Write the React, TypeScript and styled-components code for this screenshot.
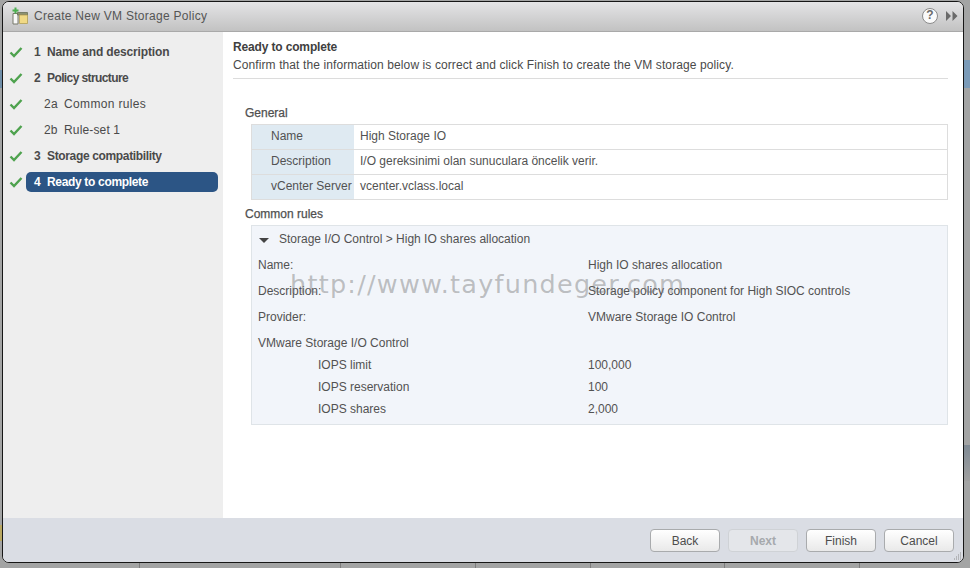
import React from "react";
import styled, { createGlobalStyle } from "styled-components";

const Global = createGlobalStyle`
  html, body { margin: 0; padding: 0; width: 970px; height: 568px; overflow: hidden; background: #a3a3a3; }
  * { box-sizing: border-box; }
  body { font-family: "Liberation Sans", Arial, sans-serif; font-size: 12px; color: #525252; }
`;

const Backdrop = styled.div`
  position: relative;
  width: 970px;
  height: 568px;
  padding: 1px 6px 5px 2px;
  background-color: #a3a4a4;
  background-image:
    linear-gradient(#7b9bb8, #7b9bb8),
    linear-gradient(#7f8a94, #a0a0a0),
    linear-gradient(#6f8ea8, #6f8ea8),
    linear-gradient(#b9a862, #b9a862),
    linear-gradient(90deg, #7d7d7d 1px, transparent 1px),
    linear-gradient(90deg, #7d7d7d 1px, transparent 1px),
    linear-gradient(90deg, #7d7d7d 1px, transparent 1px),
    linear-gradient(90deg, #7d7d7d 1px, transparent 1px),
    linear-gradient(90deg, #7d7d7d 1px, transparent 1px),
    linear-gradient(90deg, #7d7d7d 1px, transparent 1px);
  background-repeat: no-repeat;
  background-size: 6px 28px, 6px 36px, 2px 18px, 2px 16px, 1px 5px, 1px 5px, 1px 5px, 1px 5px, 1px 5px, 1px 5px;
  background-position: 964px 60px, 964px 445px, 0 70px, 0 525px, 139px 563px, 340px 563px, 475px 563px, 590px 563px, 724px 563px, 859px 563px;
`;

const Dialog = styled.div`
  width: 962px;
  height: 562px;
  display: flex;
  flex-direction: column;
  border: 1px solid #161616;
  border-radius: 7px;
  overflow: hidden;
  background: #fff;
`;

const Header = styled.header`
  flex: 0 0 30px;
  display: flex;
  align-items: center;
  padding: 0 5px 1px 9px;
  gap: 4px;
  background: linear-gradient(#e4e4e6, #c2c2c2);
  border-bottom: 1px solid #a9a9a9;
`;

const Title = styled.div`
  flex: 1;
  font-size: 12px;
  color: #555555;
  letter-spacing: 0.28px;
`;

const HelpIcon = styled.div`
  width: 16px;
  height: 16px;
  margin-right: 4px;
  border-radius: 50%;
  border: 1.5px solid #8a8a8a;
  background: #fafafa;
  color: #6a6a6a;
  font-size: 12px;
  font-weight: bold;
  line-height: 13px;
  text-align: center;
`;

const Body = styled.div`
  flex: 1;
  display: flex;
  min-height: 0;
`;

const Sidebar = styled.nav`
  flex: 0 0 220px;
  background: #eeeeee;
  padding: 10px 5px 0 0;
  display: flex;
  flex-direction: column;
  gap: 6px;
`;

const Step = styled.div`
  display: flex;
  align-items: center;
  height: 20px;
  gap: 3px;
  padding-left: 6px;
`;

const StepLabel = styled.div<{ $active?: boolean; $sub?: boolean; $spacing: number }>`
  flex: 1;
  height: 20px;
  line-height: 20px;
  border-radius: 5px;
  display: flex;
  padding-left: ${(p) => (p.$sub ? 18 : 8)}px;
  background: ${(p) => (p.$active ? "#2c5585" : "transparent")};
  color: ${(p) => (p.$active ? "#ffffff" : "#4a4a4a")};
  font-weight: ${(p) => (p.$sub ? "normal" : "bold")};
  letter-spacing: ${(p) => p.$spacing}px;
`;

const StepNum = styled.span<{ $sub?: boolean }>`
  flex: 0 0 ${(p) => (p.$sub ? 20 : 13)}px;
`;

const Main = styled.main`
  flex: 1;
  padding: 8px 15px 0 10px;
  min-width: 0;
`;

const Heading = styled.div`
  font-weight: bold;
  font-size: 12px;
  letter-spacing: -0.15px;
  color: #404040;
  line-height: 14px;
`;

const Sub = styled.div`
  font-size: 12px;
  line-height: 14px;
  margin-top: 4px;
  letter-spacing: 0.1px;
  color: #4a4a4a;
  padding-bottom: 6px;
  border-bottom: 1px solid #dcdcdc;
`;

const Section = styled.div<{ $top: number }>`
  margin: ${(p) => p.$top}px 0 0 12px;
  font-size: 12px;
  color: #505050;
  line-height: 14px;
  -webkit-text-stroke: 0.25px #505050;
`;

const InfoTable = styled.div`
  margin: 4px 0 0 18px;
  border: 1px solid #dddddd;
`;

const InfoRow = styled.div`
  display: flex;
  height: 24px;
  & + & { height: 25px; border-top: 1px solid #dddddd; }
`;

const InfoKey = styled.div`
  flex: 0 0 102px;
  background: #dfeaf2;
  padding-left: 19px;
  line-height: 23px;
  white-space: nowrap;
  overflow: hidden;
`;

const InfoVal = styled.div`
  flex: 1;
  padding-left: 6px;
  line-height: 23px;
`;

const Rules = styled.div`
  margin: 4px 0 0 18px;
  border: 1px solid #dfe4e8;
  background: #f2f5fa;
  height: 200px;
  padding: 0 0 0 6px;
`;

const RuleHead = styled.div`
  display: flex;
  align-items: center;
  height: 26px;
  gap: 10px;
`;

const Caret = styled.div`
  width: 0;
  height: 0;
  margin-top: 2px;
  border-left: 5px solid transparent;
  border-right: 5px solid transparent;
  border-top: 5px solid #444;
  margin-left: 1px;
`;

const KV = styled.div<{ $h: number; $line?: number; $indent?: boolean }>`
  display: grid;
  grid-template-columns: ${(p) => (p.$indent ? "60px 270px 1fr" : "330px 1fr")};
  height: ${(p) => p.$h}px;
  line-height: ${(p) => p.$line ?? p.$h}px;
`;

const Footer = styled.footer`
  flex: 0 0 44px;
  background: #dadde4;
  display: flex;
  justify-content: flex-end;
  gap: 8px;
  padding: 11px 9px 0 0;
  position: relative;
`;

const Button = styled.button<{ $disabled?: boolean }>`
  width: 70px;
  height: 23px;
  padding: 0;
  border: 1px solid ${(p) => (p.$disabled ? "#cfd2d6" : "#a9abad")};
  border-radius: 4px;
  background: ${(p) => (p.$disabled ? "#e4e6ea" : "linear-gradient(#ffffff, #e9e9e9)")};
  color: ${(p) => (p.$disabled ? "#a6a9ad" : "#4d4d4d")};
  font: ${(p) => (p.$disabled ? "bold" : "normal")} 12px "Liberation Sans", Arial, sans-serif;
`;

const Grip = styled.svg`
  position: absolute;
  right: 1px;
  bottom: 1px;
`;

const Watermark = styled.div`
  position: absolute;
  left: 290px;
  top: 268px;
  font-family: "DejaVu Sans", sans-serif;
  font-size: 25.5px;
  line-height: 32px;
  letter-spacing: 1.24px;
  color: rgba(120, 120, 120, 0.45);
  white-space: nowrap;
`;

const Tick = () => (
  <svg width="14" height="12" viewBox="0 0 14 12">
    <path d="M1.5 6.5 L5 10 L12.5 2" fill="none" stroke="#4ea24e" strokeWidth="2.4" />
  </svg>
);

const PolicyIcon = () => (
  <svg width="18" height="18" viewBox="0 0 18 18">
    <path d="M1 6.5h5v10.5H1z" fill="#f8f8f8" stroke="#77786a" strokeWidth="1" />
    <path d="M5.5 5.5h10v2.5h-10z" fill="#8d9272" stroke="#6a6e55" strokeWidth="0.8" />
    <path d="M7.5 8h8v8.5h-8z" fill="#f0d985" stroke="#b39f55" strokeWidth="0.8" />
    <path d="M0.5 3.5h6M3.5 0.5v6" stroke="#4caf50" strokeWidth="2" />
  </svg>
);

const steps = [
  { n: "1", t: "Name and description", sp: -0.15 },
  { n: "2", t: "Policy structure", sp: -0.6 },
  { n: "2a", t: "Common rules", sub: true, sp: 0.35 },
  { n: "2b", t: "Rule-set 1", sub: true, sp: 0.15 },
  { n: "3", t: "Storage compatibility", sp: -0.35 },
  { n: "4", t: "Ready to complete", active: true, sp: -0.33 },
];

export default function App() {
  return (
    <Backdrop>
      <Global />
      <Dialog>
        <Header>
          <PolicyIcon />
          <Title>Create New VM Storage Policy</Title>
          <HelpIcon>?</HelpIcon>
          <svg width="12" height="10" viewBox="0 0 12 10">
            <path d="M0 0l5 5-5 5zM6.5 0l5 5-5 5z" fill="#6a6a6a" />
          </svg>
        </Header>
        <Body>
          <Sidebar>
            {steps.map((s) => (
              <Step key={s.n}>
                <Tick />
                <StepLabel $active={s.active} $sub={s.sub} $spacing={s.sp}>
                  <StepNum $sub={s.sub}>{s.n}</StepNum>
                  {s.t}
                </StepLabel>
              </Step>
            ))}
          </Sidebar>
          <Main>
            <Heading>Ready to complete</Heading>
            <Sub>Confirm that the information below is correct and click Finish to create the VM storage policy.</Sub>
            <Section $top={27}>General</Section>
            <InfoTable>
              <InfoRow><InfoKey>Name</InfoKey><InfoVal>High Storage IO</InfoVal></InfoRow>
              <InfoRow><InfoKey>Description</InfoKey><InfoVal>I/O gereksinimi olan sunuculara öncelik verir.</InfoVal></InfoRow>
              <InfoRow><InfoKey>vCenter Server</InfoKey><InfoVal>vcenter.vclass.local</InfoVal></InfoRow>
            </InfoTable>
            <Section $top={7}>Common rules</Section>
            <Rules>
              <RuleHead>
                <Caret />
                <span>Storage I/O Control &gt; High IO shares allocation</span>
              </RuleHead>
              <KV $h={26}><span>Name:</span><span>High IO shares allocation</span></KV>
              <KV $h={26}><span>Description:</span><span>Storage policy component for High SIOC controls</span></KV>
              <KV $h={26}><span>Provider:</span><span>VMware Storage IO Control</span></KV>
              <KV $h={24} $line={26}><span>VMware Storage I/O Control</span><span /></KV>
              <KV $h={22} $indent><span /><span>IOPS limit</span><span>100,000</span></KV>
              <KV $h={22} $indent><span /><span>IOPS reservation</span><span>100</span></KV>
              <KV $h={22} $indent><span /><span>IOPS shares</span><span>2,000</span></KV>
            </Rules>
          </Main>
        </Body>
        <Footer>
          <Button>Back</Button>
          <Button $disabled>Next</Button>
          <Button>Finish</Button>
          <Button>Cancel</Button>
          <Grip width="9" height="9" viewBox="0 0 9 9">
            <path d="M7 1h1M5 3h1M7 3h1M3 5h1M5 5h1M7 5h1M1 7h1M3 7h1M5 7h1M7 7h1" stroke="#8c8c8c" strokeWidth="1" />
          </Grip>
        </Footer>
      </Dialog>
      <Watermark>http://www.tayfundeger.com</Watermark>
    </Backdrop>
  );
}
